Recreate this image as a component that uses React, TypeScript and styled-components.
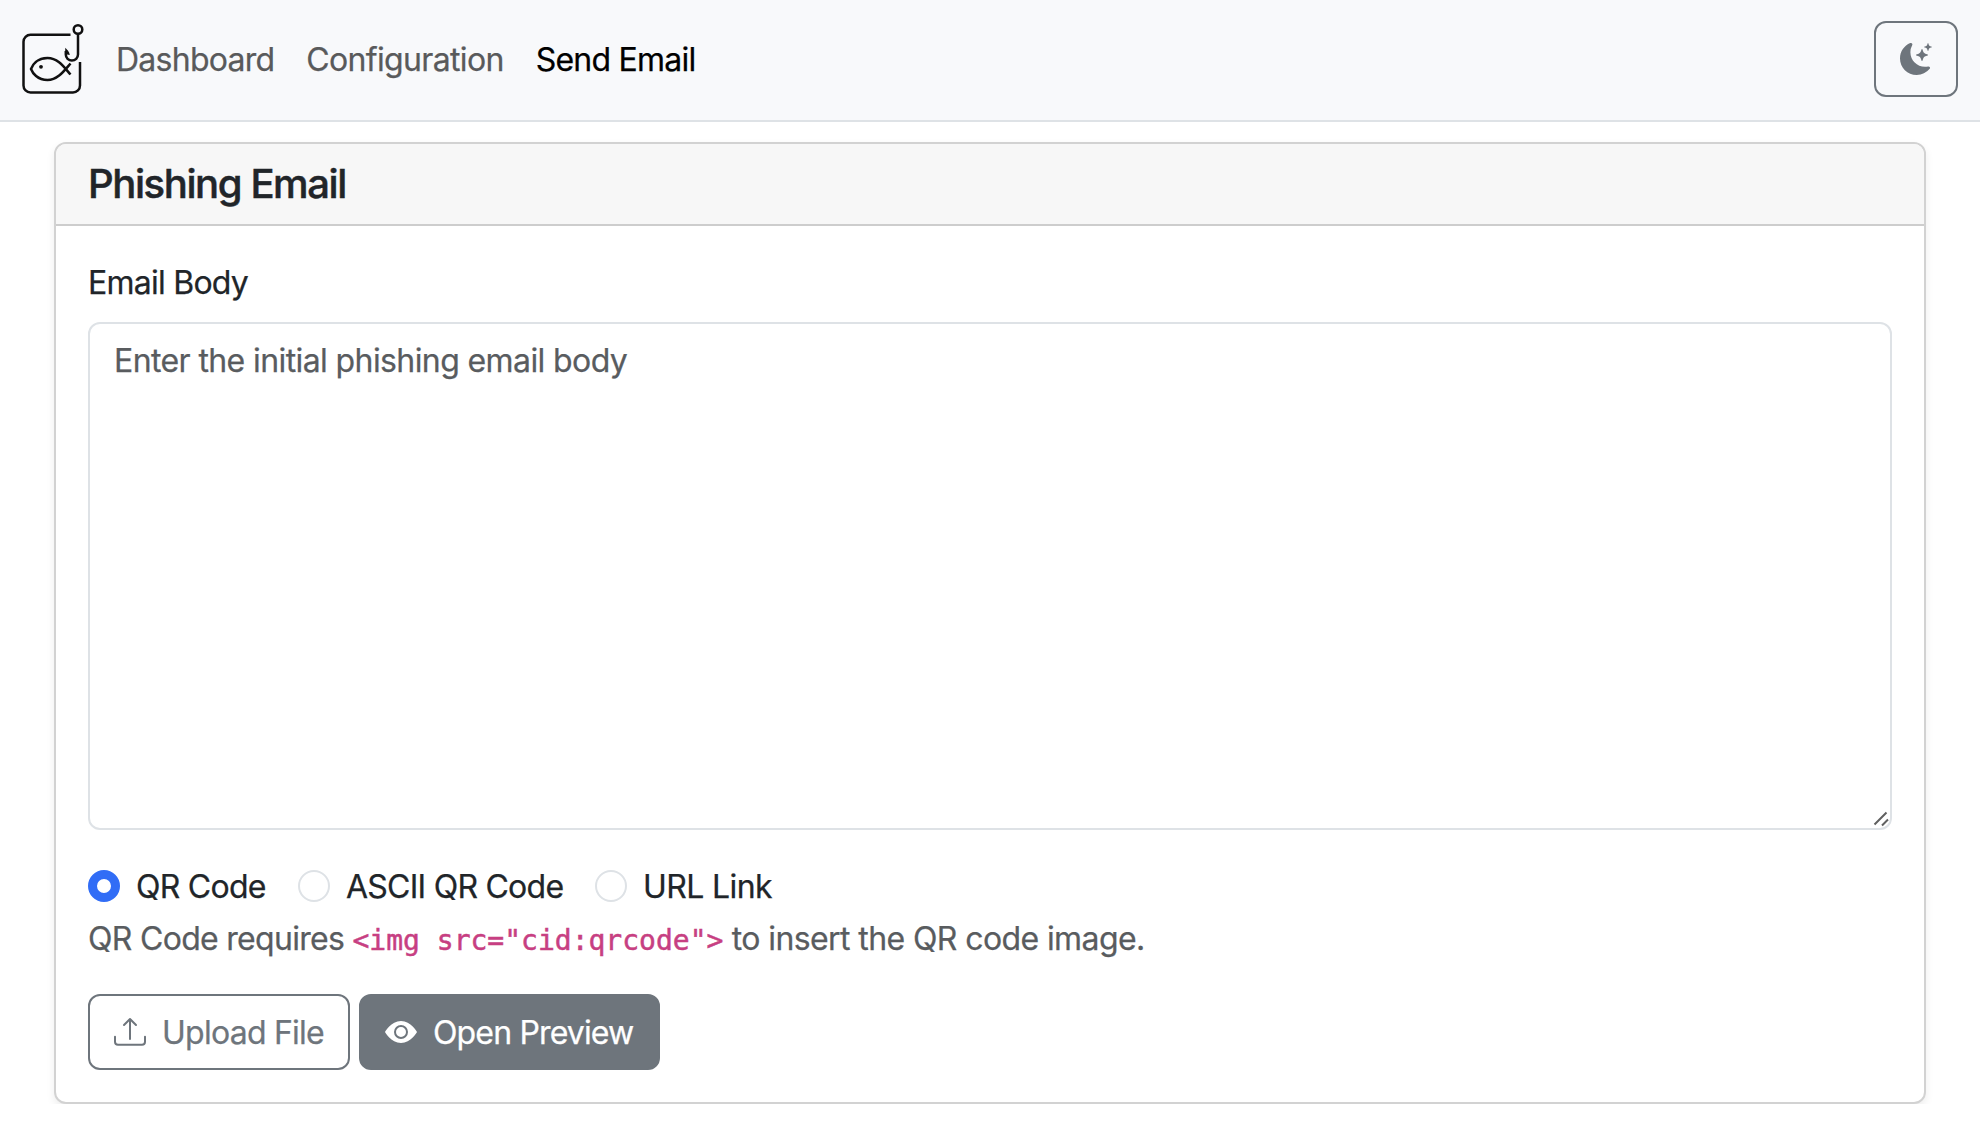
import React from "react";
import styled, { createGlobalStyle } from "styled-components";
import { BsMoonStarsFill, BsUpload, BsEyeFill } from "react-icons/bs";

const Global = createGlobalStyle`
  *, *::before, *::after { box-sizing: border-box; }
  body {
    margin: 0;
    background: #fff;
    color: #212529;
    font-family: Inter, "Liberation Sans", sans-serif;
    font-size: 32px;
    line-height: 48px;
    overflow: hidden;
    -webkit-text-stroke: 0.25px;
  }
`;

const Text = styled.span<{ $track?: number }>`
  letter-spacing: ${(p) => p.$track ?? -0.75}px;
  white-space: pre;
`;

const Navbar = styled.nav`
  display: flex;
  align-items: center;
  height: 122px;
  padding: 0 22px;
  background: #f8f9fb;
  border-bottom: 2px solid #dee2e6;
`;

const Logo = styled.svg`
  display: block;
  width: 64px;
  height: 76px;
  flex: none;
`;

const NavList = styled.div`
  display: flex;
  gap: 32px;
  margin-left: 30px;
  flex: 1;
`;

const NavLink = styled.a<{ $active?: boolean }>`
  color: ${(p) => (p.$active ? "#000" : "#595a5b")};
  text-decoration: none;
`;

const Button = styled.button<{ $solid?: boolean; $width: number }>`
  display: inline-flex;
  align-items: center;
  justify-content: flex-start;
  gap: 16px;
  width: ${(p) => p.$width}px;
  height: 76px;
  padding: 0 24px;
  border: 2px solid #6e757c;
  border-radius: 12px;
  background: ${(p) => (p.$solid ? "#6e757c" : "transparent")};
  color: ${(p) => (p.$solid ? "#fff" : "#6e757c")};
  font: inherit;

  svg {
    width: 32px;
    height: 32px;
    flex: none;
  }

  ${Text} {
    padding-top: 2px;
  }
`;

const ThemeButton = styled(Button)`
  margin-bottom: 2px;
`;

const Card = styled.section`
  margin: 20px 54px 0;
  border: 2px solid #d2d2d2;
  border-radius: 12px;
  background: #fff;
  box-shadow: 0 4px 8px rgba(0, 0, 0, 0.075);
`;

const CardHeader = styled.header`
  padding: 16px 32px;
  height: 82px;
  background: #f7f7f7;
  border-bottom: 2px solid #cdcdcd;
  border-radius: 10px 10px 0 0;
`;

const Title = styled.h5`
  margin: 0;
  font-size: 40px;
  line-height: 48px;
  font-weight: 500;
  -webkit-text-stroke: 0.5px;
`;

const CardBody = styled.div`
  padding: 32px;
`;

const Label = styled.label`
  display: block;
  padding-top: 1px;
  margin-bottom: 15px;
`;

const Field = styled.div`
  position: relative;
`;

const TextArea = styled.textarea`
  display: block;
  width: 100%;
  height: 508px;
  padding: 13px 24px 12px;
  border: 2px solid #dee2e6;
  border-radius: 12px;
  background: #fff;
  font: inherit;
  letter-spacing: -0.6px;
  resize: none;
  outline: none;

  &::placeholder {
    color: #595c5f;
    opacity: 1;
  }
`;

const Grip = styled.svg`
  position: absolute;
  right: 1px;
  bottom: 2px;
  width: 18px;
  height: 18px;
`;

const Options = styled.div`
  display: flex;
  gap: 32px;
  height: 48px;
  margin-top: 32px;
`;

const Option = styled.label<{ $width?: number }>`
  display: flex;
  align-items: center;
  gap: 16px;
  width: ${(p) => (p.$width ? `${p.$width}px` : "auto")};

  ${Text} {
    padding-top: 2px;
  }
`;

const Radio = styled.input`
  appearance: none;
  width: 32px;
  height: 32px;
  margin: 0;
  flex: none;
  border: 2px solid #dee2e6;
  border-radius: 50%;
  background: #fff;

  &:checked {
    border: 9px solid #316df6;
  }
`;

const Help = styled.div`
  height: 48px;
  margin-top: 5px;
  color: #595c5f;
  white-space: pre;
`;

const Code = styled.code`
  font-family: "DejaVu Sans Mono", "Liberation Mono", monospace;
  font-size: 28px;
  line-height: 1;
  color: #c73f82;
  -webkit-text-stroke: 0.5px;
`;

const Actions = styled.div`
  display: flex;
  gap: 9px;
  margin-top: 31px;
`;

export default function App() {
  return (
    <>
      <Global />
      <Navbar>
        <Logo viewBox="0 0 64 76" fill="none" stroke="#111" strokeWidth="2.5">
          <path d="M48.500 12.800H8.500a7 7 0 0 0-7 7V63.500a7 7 0 0 0 7 7H51a7 7 0 0 0 7-7V40" />
          <circle cx="56" cy="7.500" r="4.300" />
          <path d="M56 12V32.500a6 6 0 0 1-12.200 0V29" />
          <path d="M43.300 25.800C45 27.500 47.500 30 47.800 33L45 32.500L43 34Z" fill="#111" stroke="none" />
          <path d="M48.500 52.500C42 45 36 36 25.500 36S10.500 43 9 47c1.500 4 6.500 11 16.500 11S42 49 48.500 41.500" />
          <circle cx="19" cy="44.800" r="1.900" fill="#111" stroke="none" />
        </Logo>
        <NavList>
          <NavLink><Text>Dashboard</Text></NavLink>
          <NavLink><Text $track={-0.66}>Configuration</Text></NavLink>
          <NavLink $active><Text>Send Email</Text></NavLink>
        </NavList>
        <ThemeButton $width={84} aria-label="Toggle theme">
          <BsMoonStarsFill />
        </ThemeButton>
      </Navbar>
      <Card>
        <CardHeader>
          <Title><Text $track={-1.4}>Phishing Email</Text></Title>
        </CardHeader>
        <CardBody>
          <Label><Text>Email Body</Text></Label>
          <Field>
            <TextArea placeholder="Enter the initial phishing email body" />
            <Grip viewBox="0 0 18 18" stroke="#606060" strokeWidth="2" fill="none">
              <path d="M1.500 14.500L13.500 2.500M9 15.500L15 9.500" />
            </Grip>
          </Field>
          <Options>
            <Option $width={178}>
              <Radio type="radio" name="kind" defaultChecked />
              <Text>QR Code</Text>
            </Option>
            <Option $width={265}>
              <Radio type="radio" name="kind" />
              <Text>ASCII QR Code</Text>
            </Option>
            <Option>
              <Radio type="radio" name="kind" />
              <Text $track={-0.6}>URL Link</Text>
            </Option>
          </Options>
          <Help>
            <Text $track={-0.7}>{"QR Code requires "}</Text>
            <Code>{'<img src="cid:qrcode">'}</Code>
            <Text $track={-0.6}>{" to insert the QR code image."}</Text>
          </Help>
          <Actions>
            <Button $width={262}>
              <BsUpload />
              <Text>Upload File</Text>
            </Button>
            <Button $solid $width={301}>
              <BsEyeFill />
              <Text $track={-0.85}>Open Preview</Text>
            </Button>
          </Actions>
        </CardBody>
      </Card>
    </>
  );
}
